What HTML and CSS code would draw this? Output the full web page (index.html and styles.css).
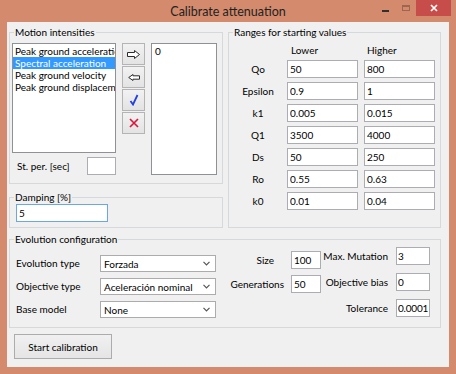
FILE: index.html
```html
<!DOCTYPE html>
<html lang="en">
<head>
    <meta charset="UTF-8">
    <meta name="viewport" content="width=device-width, initial-scale=1.0">
    <title>Calibrate attenuation</title>
    <link rel="stylesheet" href="styles.css">
</head>
<body>
    <div class="window">
        <!-- Title bar -->
        <div class="titlebar">
            <span class="title">Calibrate attenuation</span>
            <div class="caption">
                <svg class="cap-min" width="17" height="16" viewBox="0 0 17 16"><rect x="5" y="10" width="7" height="2" fill="#2f2f2f"/></svg>
                <svg class="cap-max" width="22" height="16" viewBox="0 0 22 16"><rect x="8.5" y="5.5" width="7" height="5" fill="none" stroke="#9c6650" stroke-width="1"/><rect x="8" y="5" width="8" height="2" fill="#9c6650"/></svg>
                <div class="cap-close">
                    <svg width="10" height="10" viewBox="0 0 10 10"><path d="M2 2 L8 8 M8 2 L2 8" stroke="#fff" stroke-width="1.7"/></svg>
                </div>
            </div>
        </div>

        <div class="client">
            <div class="top-row">
                <div class="left-col">
                    <!-- Motion intensities -->
                    <fieldset class="group motion">
                        <legend>Motion intensities</legend>
                        <div class="motion-body">
                            <div class="motion-left">
                                <div class="listbox">
                                    <div class="item">Peak ground acceleration</div>
                                    <div class="item selected">Spectral acceleration</div>
                                    <div class="item">Peak ground velocity</div>
                                    <div class="item">Peak ground displacement</div>
                                </div>
                                <div class="period-row">
                                    <span>St. per. [sec]</span>
                                    <input type="text" class="field period" value="">
                                </div>
                            </div>
                            <div class="tool-buttons">
                                <button class="tool">
                                    <svg width="13" height="9" viewBox="0 0 13 9"><path d="M0.5 2.5 H7.5 V0.5 L12.5 4.5 L7.5 8.5 V6.5 H0.5 Z" fill="#fff" stroke="#2b2b2b"/></svg>
                                </button>
                                <button class="tool">
                                    <svg width="12" height="7" viewBox="0 0 12 7"><path d="M11.5 1.8 H5 V0.5 L0.7 3.5 L5 6.5 V5.2 H11.5 Z" fill="#fff" stroke="#2b2b2b"/></svg>
                                </button>
                                <button class="tool">
                                    <svg width="10" height="12" viewBox="0 0 10 12"><path d="M1.5 7 L4 10.5 L8.5 1" fill="none" stroke="#2340e0" stroke-width="1.8"/></svg>
                                </button>
                                <button class="tool">
                                    <svg width="10" height="10" viewBox="0 0 10 10"><path d="M1 1 L9 9 M9 1 L1 9" stroke="#e0143c" stroke-width="1.7"/></svg>
                                </button>
                            </div>
                            <div class="listbox periods">
                                <div class="item">0</div>
                            </div>
                        </div>
                    </fieldset>

                    <!-- Damping -->
                    <fieldset class="group damping">
                        <legend>Damping [%]</legend>
                        <input type="text" class="field damping-field" value="5">
                    </fieldset>
                </div>

                <!-- Ranges for starting values -->
                <fieldset class="group ranges">
                    <legend>Ranges for starting values</legend>
                    <div class="range-grid">
                        <span></span><span class="col-head">Lower</span><span class="col-head">Higher</span>
                        <span class="param">Qo</span><input type="text" class="field" value="50"><input type="text" class="field" value="800">
                        <span class="param">Epsilon</span><input type="text" class="field" value="0.9"><input type="text" class="field" value="1">
                        <span class="param">k1</span><input type="text" class="field" value="0.005"><input type="text" class="field" value="0.015">
                        <span class="param">Q1</span><input type="text" class="field" value="3500"><input type="text" class="field" value="4000">
                        <span class="param">Ds</span><input type="text" class="field" value="50"><input type="text" class="field" value="250">
                        <span class="param">Ro</span><input type="text" class="field" value="0.55"><input type="text" class="field" value="0.63">
                        <span class="param">k0</span><input type="text" class="field" value="0.01"><input type="text" class="field" value="0.04">
                    </div>
                </fieldset>
            </div>

            <!-- Evolution configuration -->
            <fieldset class="group evolution">
                <legend>Evolution configuration</legend>
                <div class="evo-body">
                    <div class="evo-combos">
                        <span class="evo-label">Evolution type</span>
                        <div class="combo"><span>Forzada</span><svg width="7" height="5" viewBox="0 0 7 5"><path d="M0.5 0.8 L3.5 3.8 L6.5 0.8" fill="none" stroke="#555" stroke-width="1.2"/></svg></div>
                        <span class="evo-label">Objective type</span>
                        <div class="combo"><span>Aceleración nominal</span><svg width="7" height="5" viewBox="0 0 7 5"><path d="M0.5 0.8 L3.5 3.8 L6.5 0.8" fill="none" stroke="#555" stroke-width="1.2"/></svg></div>
                        <span class="evo-label">Base model</span>
                        <div class="combo"><span>None</span><svg width="7" height="5" viewBox="0 0 7 5"><path d="M0.5 0.8 L3.5 3.8 L6.5 0.8" fill="none" stroke="#555" stroke-width="1.2"/></svg></div>
                    </div>
                    <div class="evo-mid">
                        <span class="evo-num size-label">Size</span><input type="text" class="field" value="100">
                        <span class="evo-num">Generations</span><input type="text" class="field" value="50">
                    </div>
                    <div class="evo-right">
                        <span class="evo-num">Max. Mutation</span><input type="text" class="field" value="3">
                        <span class="evo-num">Objective bias</span><input type="text" class="field" value="0">
                        <span class="evo-num">Tolerance</span><input type="text" class="field" value="0.0001">
                    </div>
                </div>
            </fieldset>

            <button class="start-button">Start calibration</button>
        </div>
    </div>
</body>
</html>
```

FILE: styles.css
```css
* {
    margin: 0;
    padding: 0;
    box-sizing: border-box;
}

body {
    background-color: #d38a6d;
    font-family: Lato, "Liberation Sans", sans-serif;
    font-size: 10px;
    color: #000;
}

.window {
    width: 456px;
    height: 374px;
    display: flex;
    flex-direction: column;
}

/* Title bar */
.titlebar {
    height: 22px;
    display: grid;
    grid-template-columns: 1fr auto 1fr;
}

.title {
    grid-column: 2;
    font-size: 12.5px;
    line-height: 23px;
    color: #222;
}

.caption {
    grid-column: 3;
    justify-self: end;
    display: flex;
    align-items: flex-start;
    padding-right: 5px;
}

.cap-close {
    width: 35px;
    height: 16px;
    background-color: #c74d4b;
    display: flex;
    justify-content: center;
    align-items: center;
}

/* Client area */
.client {
    flex: 1;
    margin: 0 7px 7px;
    background-color: #f0f0f0;
    padding: 4px 8px 0 2px;
}

.top-row {
    display: flex;
    gap: 5px;
}

.left-col {
    width: 214px;
    display: flex;
    flex-direction: column;
    gap: 7px;
}

.group {
    border: 1px solid #d5d9dc;
    padding: 0 5px 0 2px;
    min-width: 0;
}

.group legend {
    line-height: 12px;
    padding: 0 1px;
    margin-left: 2px;
}

/* Motion intensities */
.motion {
    padding-top: 5px;
    padding-bottom: 8px;
}

.motion-body {
    display: flex;
    gap: 6px;
}

.motion-left {
    width: 104px;
    display: flex;
    flex-direction: column;
    gap: 4px;
}

.listbox {
    height: 110px;
    background-color: #fff;
    border: 1px solid #8e9297;
    padding-top: 1px;
    overflow: hidden;
}

.listbox .item {
    line-height: 12px;
    padding-left: 2px;
    white-space: nowrap;
}

.listbox .item.selected {
    background-color: #3399ff;
    color: #fff;
}

.listbox.periods {
    width: 66px;
    height: 132px;
}

.listbox.periods .item {
    padding-left: 3px;
}

.period-row {
    display: flex;
    justify-content: space-between;
    align-items: center;
    padding-left: 5px;
}

.field {
    height: 18px;
    min-width: 0;
    border: 1px solid #abadb3;
    background-color: #fff;
    font: inherit;
    padding: 0 2px;
    outline: none;
}

.field.period {
    width: 29px;
}

.tool-buttons {
    width: 23px;
    display: flex;
    flex-direction: column;
    gap: 1px;
}

.tool {
    height: 22px;
    border: 1px solid #b4b4b4;
    background: linear-gradient(#f2f2f2, #e3e3e3);
    display: flex;
    justify-content: center;
    align-items: center;
}

/* Damping */
.damping {
    padding-top: 1px;
    padding-bottom: 5px;
}

.damping-field {
    width: 92px;
    margin-left: 4px;
    border-color: #6aa7e6;
}

/* Ranges */
.ranges {
    width: 213px;
    padding-top: 6px;
    padding-right: 7px;
}

.range-grid {
    display: grid;
    grid-template-columns: 54px 71px 75px;
    grid-template-rows: 12px;
    grid-auto-rows: 18px;
    column-gap: 2px;
    row-gap: 4px;
}

.range-grid .field:nth-child(3n) {
    margin-left: 4px;
    width: 71px;
}

.col-head {
    line-height: 12px;
    padding-left: 4px;
    margin-bottom: 1px;
}

.range-grid .col-head:nth-child(3) {
    padding-left: 7px;
}

.param {
    text-align: center;
    line-height: 18px;
}

/* Evolution configuration */
.evolution {
    margin-top: 5px;
    padding-bottom: 9px;
    padding-right: 10px;
}

.evo-body {
    display: flex;
    align-items: flex-start;
}

.evo-combos {
    display: grid;
    grid-template-columns: 88px 116px;
    grid-auto-rows: 17px;
    row-gap: 6px;
    margin-top: 10px;
}

.evo-label {
    padding-left: 4px;
    line-height: 17px;
}

.combo {
    border: 1px solid #acacac;
    background-color: #fff;
    display: flex;
    justify-content: space-between;
    align-items: center;
    padding: 0 5px 0 3px;
}

.evo-mid {
    display: grid;
    grid-template-columns: 68px 30px;
    grid-auto-rows: 18px;
    column-gap: 7px;
    row-gap: 6px;
    margin-top: 6px;
}

.evo-right {
    display: grid;
    grid-template-columns: 67px 34px;
    grid-auto-rows: 18px;
    column-gap: 8px;
    row-gap: 8px;
    margin-top: 2px;
}

.evo-right .field {
    padding: 0 1px;
    letter-spacing: -0.2px;
}

.evo-num {
    text-align: right;
    line-height: 18px;
    white-space: nowrap;
}

.size-label {
    padding-right: 10px;
}

.start-button {
    display: block;
    width: 98px;
    height: 25px;
    margin: 6px 0 0 5px;
    border: 1px solid #acacac;
    background: linear-gradient(#f0f0f0, #e5e5e5);
    font: inherit;
    color: #000;
}
```
